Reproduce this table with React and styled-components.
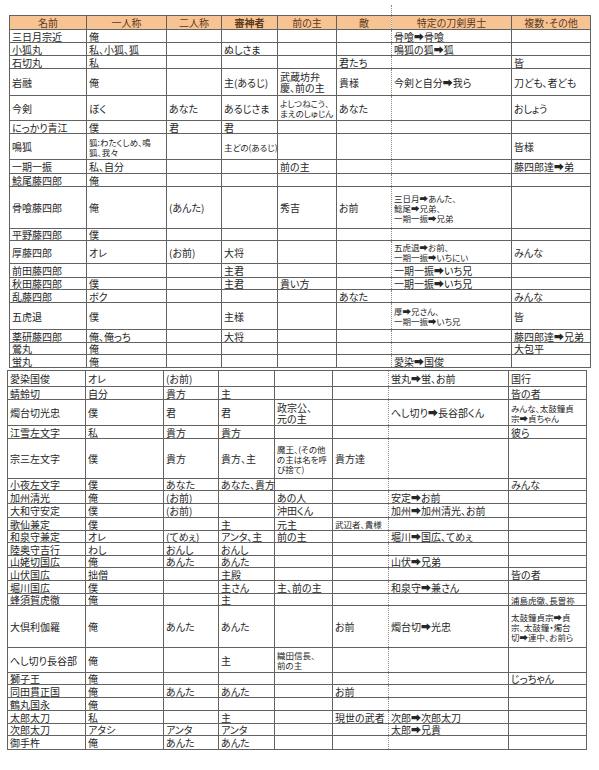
import React from 'react';
import styled, { createGlobalStyle } from 'styled-components';

const GlobalStyle = createGlobalStyle`
  html, body { margin: 0; padding: 0; background: #fff; }
  body { font-family: "Noto Sans CJK JP", "DejaVu Sans", sans-serif; }
`;

const Page = styled.div`
  width: 599px;
  height: 770px;
  overflow: hidden;
  padding-top: 15px;
  box-sizing: border-box;
`;

const Sheet = styled.table`
  border-collapse: collapse;
  table-layout: fixed;
  width: ${p => p.$width}px;
  margin: ${p => p.$top}px 0 0 ${p => p.$left}px;
  color: #262626;
  font-feature-settings: "palt";
`;

const Row = styled.tr`
  height: ${p => p.$h}px;
`;

const Head = styled.th`
  position: relative;
  background: #f8c393;
  border: 1px solid #626262;
  padding: 0;
  font-size: 10px;
  line-height: 12px;
  font-weight: ${p => (p.$bold ? 700 : 400)};
  color: #5a3a1c;
  text-align: center;
  white-space: nowrap;

  &:nth-child(6) { border-right: 1px dotted #8a8a8a; }
  &:nth-child(7) { border-left: 1px dotted #8a8a8a; }
  &:nth-child(7)::before {
    content: '';
    position: absolute;
    left: -1px;
    top: -11px;
    height: 10px;
    border-left: 1px dotted #8a8a8a;
  }
`;

const Cell = styled.td`
  border: 1px solid #626262;
  padding: 0 2px;
  font-size: ${p => (p.$small ? 8.5 : 10)}px;
  line-height: ${p => (p.$small ? 10 : 11)}px;
  vertical-align: middle;
  white-space: nowrap;
  overflow: visible;
  text-align: left;

  &:nth-child(6) { border-right: 1px dotted #8a8a8a; }
  &:nth-child(7) { border-left: 1px dotted #8a8a8a; }
`;

const S = t => ({ t, small: true });

const headers = ['名前', '一人称', '二人称', '審神者', '前の主', '敵', '特定の刀剣男士', '複数･その他'];

const topCols = [77, 80, 55, 56, 59, 55, 120, 79];
const bottomCols = [78, 78, 55, 56, 58, 56, 120, 78];

const topRows = [
  [13, '三日月宗近', '俺', '', '', '', '', '骨喰➡骨喰', ''],
  [13, '小狐丸', '私、小狐、狐', '', 'ぬしさま', '', '', '鳴狐の狐➡狐', ''],
  [13, '石切丸', '私', '', '', '', '君たち', '', '皆'],
  [27, '岩融', '俺', '', '主(あるじ)', '武蔵坊弁\n慶、前の主', '貴様', '今剣と自分➡我ら', '刀ども、者ども'],
  [25, '今剣', 'ぼく', 'あなた', 'あるじさま', S('よしつねこう、\nまえのしゅじん'), 'あなた', '', 'おしょう'],
  [13, 'にっかり青江', '僕', '君', '君', '', '', '', ''],
  [26, '鳴狐', S('狐:わたくしめ、鳴\n狐、我々'), '', S('主どの(あるじ)'), '', '', '', '皆様'],
  [14, '一期一振', '私、自分', '', '', '前の主', '', '', '藤四郎達➡弟'],
  [13, '鯰尾藤四郎', '俺', '', '', '', '', '', ''],
  [42, '骨喰藤四郎', '俺', '(あんた)', '', '秀吉', 'お前', S('三日月➡あんた、\n鯰尾➡兄弟、\n一期一振➡兄弟'), ''],
  [12, '平野藤四郎', '僕', '', '', '', '', '', ''],
  [23, '厚藤四郎', 'オレ', '(お前)', '大将', '', '', S('五虎退➡お前、\n一期一振➡いちにい'), 'みんな'],
  [14, '前田藤四郎', '', '', '主君', '', '', '一期一振➡いち兄', ''],
  [12, '秋田藤四郎', '僕', '', '主君', '貴い方', '', '一期一振➡いち兄', ''],
  [13, '乱藤四郎', 'ボク', '', '', '', 'あなた', '', 'みんな'],
  [27, '五虎退', '僕', '', '主様', '', '', S('厚➡兄さん、\n一期一振➡いち兄'), '皆'],
  [13, '薬研藤四郎', '俺、俺っち', '', '大将', '', '', '', '藤四郎達➡兄弟'],
  [12, '鶯丸', '俺', '', '', '', '', '', '大包平'],
  [13, '蛍丸', '俺', '', '', '', '', '愛染➡国俊', ''],
];

const bottomRows = [
  [16, '愛染国俊', 'オレ', '(お前)', '', '', '', '蛍丸➡蛍、お前', '国行'],
  [13, '蜻蛉切', '自分', '貴方', '主', '', '', '', '皆の者'],
  [26, '燭台切光忠', '僕', '君', '君', '政宗公、\n元の主', '', 'へし切り➡長谷部くん', S('みんな、太鼓鐘貞\n宗➡貞ちゃん')],
  [13, '江雪左文字', '私', '貴方', '貴方', '', '', '', '彼ら'],
  [40, '宗三左文字', '僕', '貴方', '貴方、主', S('魔王、(その他\nの主は名を呼\nび捨て)'), '貴方達', '', ''],
  [11, '小夜左文字', '僕', 'あなた', 'あなた、貴方', '', '', '', 'みんな'],
  [13, '加州清光', '俺', '(お前)', '', 'あの人', '', '安定➡お前', ''],
  [14, '大和守安定', '僕', '(お前)', '', '沖田くん', '', '加州➡加州清光、お前', ''],
  [13, '歌仙兼定', '僕', '', '主', '元主', S('武辺者、貴様'), '', ''],
  [12, '和泉守兼定', 'オレ', '(てめぇ)', 'アンタ、主', '前の主', '', '堀川➡国広、てめぇ', ''],
  [13, '陸奥守吉行', 'わし', 'おんし', 'おんし', '', '', '', ''],
  [12, '山姥切国広', '俺', 'あんた', 'あんた', '', '', '山伏➡兄弟', ''],
  [13, '山伏国広', '拙僧', '', '主殿', '', '', '', '皆の者'],
  [13, '堀川国広', '僕', '', '主さん', '主、前の主', '', '和泉守➡兼さん', ''],
  [12, '蜂須賀虎徹', '俺', '', '主', '', '', '', S('浦島虎徹、長曽祢')],
  [42, '大倶利伽羅', '俺', 'あんた', 'あんた', '', 'お前', '燭台切➡光忠', S('太鼓鐘貞宗➡貞\n宗、太鼓鐘・燭台\n切➡連中、お前ら')],
  [25, 'へし切り長谷部', '俺', '', '主', S('織田信長、\n前の主'), '', '', ''],
  [12, '獅子王', '俺', '', '', '', '', '', 'じっちゃん'],
  [13, '同田貫正国', '俺', 'あんた', 'あんた', '', 'お前', '', ''],
  [13, '鶴丸国永', '俺', '', '', '', '', '', ''],
  [13, '太郎太刀', '私', '', '主', '', '現世の武者', '次郎➡次郎太刀', ''],
  [12, '次郎太刀', 'アタシ', 'アンタ', 'アンタ', '', '', '太郎➡兄貴', ''],
  [14, '御手杵', '俺', 'あんた', 'あんた', '', '', '', ''],
];

const Lines = ({ text }) =>
  text.split('\n').map((line, i, all) => (
    <React.Fragment key={i}>
      {line}
      {i < all.length - 1 && <br />}
    </React.Fragment>
  ));

const Body = ({ rows }) => (
  <tbody>
    {rows.map(([h, ...cells], r) => (
      <Row key={r} $h={h}>
        {cells.map((c, i) => {
          const small = typeof c === 'object';
          const text = small ? c.t : c;
          return (
            <Cell key={i} $small={small}>
              <Lines text={text} />
            </Cell>
          );
        })}
      </Row>
    ))}
  </tbody>
);

const Cols = ({ widths }) => (
  <colgroup>
    {widths.map((w, i) => <col key={i} style={{ width: w }} />)}
  </colgroup>
);

export default function App() {
  return (
    <Page>
      <GlobalStyle />
      <Sheet $width={581} $left={9} $top={0}>
        <Cols widths={topCols} />
        <thead>
          <Row $h={14}>
            {headers.map((h, i) => (
              <Head key={h} $bold={i === 3}>{h}</Head>
            ))}
          </Row>
        </thead>
        <Body rows={topRows} />
      </Sheet>
      <Sheet $width={579} $left={7} $top={2}>
        <Cols widths={bottomCols} />
        <Body rows={bottomRows} />
      </Sheet>
    </Page>
  );
}
